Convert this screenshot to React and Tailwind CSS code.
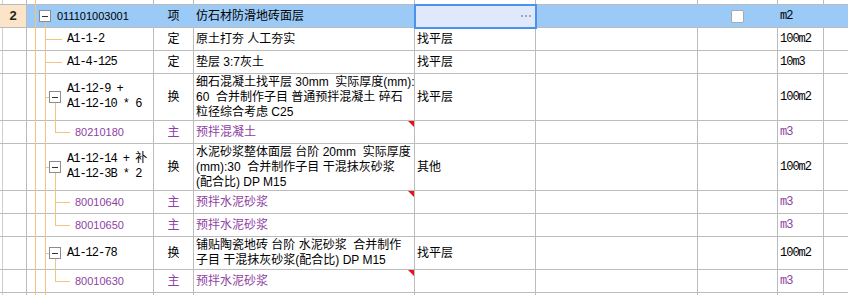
import React from 'react';

const GRID = 'grid grid-cols-[27px_127px_40px_221px_121px_162px_80px_46px_25px]';
const LINE = 'border-[#bcbcbc]';
const CJK = "font-['Liberation_Sans','Noto_Sans_CJK_SC',sans-serif]";
const MONO = "font-['Liberation_Mono','Noto_Sans_CJK_SC',monospace] text-[12px] tracking-[-1px]";
const SANS = "font-['Liberation_Sans',Arial,sans-serif] text-[11px]";
const ORANGE = 'bg-[#f1c47f]';

const rows = [
  { id: 1, hl: true, num: '2', kind: 'l1', code: ['011101003001'], sans: true, type: '项', desc: ['仿石材防滑地砖面层'], spec: 'edit', unit: 'm2', h: 'h-[23px]' },
  { id: 2, kind: 'leaf', code: ['A1-1-2'], type: '定', desc: ['原土打夯 人工夯实'], spec: '找平层', unit: '100m2', h: 'h-[23px]' },
  { id: 3, kind: 'leaf', code: ['A1-4-125'], type: '定', desc: ['垫层 3:7灰土'], spec: '找平层', unit: '10m3', h: 'h-[23px]' },
  {
    id: 4, kind: 'box', code: ['A1-12-9 +', 'A1-12-10 * 6'], type: '换',
    desc: ['细石混凝土找平层 30mm  实际厚度(mm):', '60  合并制作子目 普通预拌混凝土 碎石', '粒径综合考虑 C25'],
    spec: '找平层', unit: '100m2', h: 'h-[47px]',
  },
  { id: 5, kind: 'l3', last: true, purple: true, tri: true, code: ['80210180'], sans: true, type: '主', desc: ['预拌混凝土'], unit: 'm3', h: 'h-[23px]' },
  {
    id: 6, kind: 'box', code: ['A1-12-14 + 补', 'A1-12-3B * 2'], type: '换',
    desc: ['水泥砂浆整体面层 台阶 20mm  实际厚度', '(mm):30  合并制作子目 干混抹灰砂浆', '(配合比) DP M15'],
    spec: '其他', unit: '100m2', h: 'h-[47px]',
  },
  { id: 7, kind: 'l3', purple: true, tri: true, code: ['80010640'], sans: true, type: '主', desc: ['预拌水泥砂浆'], unit: 'm3', h: 'h-[23px]' },
  { id: 8, kind: 'l3', last: true, purple: true, code: ['80010650'], sans: true, type: '主', desc: ['预拌水泥砂浆'], unit: 'm3', h: 'h-[23px]' },
  {
    id: 9, kind: 'box', code: ['A1-12-78'], type: '换',
    desc: ['铺贴陶瓷地砖 台阶 水泥砂浆  合并制作', '子目 干混抹灰砂浆(配合比) DP M15'],
    spec: '找平层', unit: '100m2', h: 'h-[33px]',
  },
  { id: 10, kind: 'l3', last: true, purple: true, tri: true, code: ['80010630'], sans: true, type: '主', desc: ['预拌水泥砂浆'], unit: 'm3', h: 'h-[23px]' },
  { id: 11, kind: 'blank', code: [], type: '', desc: [], unit: '', h: 'h-[23px]' },
];

const MinusBox = () => (
  <div className="relative z-10 w-[12px] h-[12px] shrink-0 border border-[#8c8c8c] bg-white flex items-center justify-center">
    <div className="w-[6px] h-px bg-[#333]" />
  </div>
);

const TreeLines = ({ kind, last }) => {
  // x=35 ancestor line always; others depend on node type
  return (
    <>
      <div className={`absolute left-[8px] top-0 bottom-[-1px] w-px ${ORANGE}`} />
      {kind === 'l1' && <div className={`absolute left-[18px] top-[calc(50%+6px)] bottom-[-1px] w-px ${ORANGE}`} />}
      {kind !== 'l1' && kind !== 'top' && <div className={`absolute left-[18px] top-0 bottom-[-1px] w-px ${ORANGE}`} />}
      {kind === 'leaf' && <div className={`absolute left-[18px] top-1/2 w-[17px] h-px ${ORANGE}`} />}
      {kind === 'box' && (
        <>
          <div className={`absolute left-[18px] top-1/2 w-[4px] h-px ${ORANGE}`} />
          <div className={`absolute left-[28px] top-[calc(50%+6px)] bottom-[-1px] w-px ${ORANGE}`} />
        </>
      )}
      {kind === 'l3' && (
        <>
          {last ? (
            <div className={`absolute left-[28px] top-0 h-[calc(50%+1px)] w-px ${ORANGE}`} />
          ) : (
            <div className={`absolute left-[28px] top-0 bottom-[-1px] w-px ${ORANGE}`} />
          )}
          <div className={`absolute left-[28px] top-1/2 w-[15px] h-px ${ORANGE}`} />
        </>
      )}
    </>
  );
};

const Dots = () => (
  <div className="flex gap-[2px] mr-[4px]">
    <div className="w-[2px] h-[2px] bg-[#97a9c4]" />
    <div className="w-[2px] h-[2px] bg-[#97a9c4]" />
    <div className="w-[2px] h-[2px] bg-[#97a9c4]" />
  </div>
);

const Row = ({ r }) => {
  const txt = r.purple ? 'text-[#8e3fa3]' : 'text-black';
  const vr = r.hl ? 'border-r-transparent' : '';
  const cell = `border-r border-b ${LINE} ${vr}`;
  const pad = r.kind === 'l1' ? 'pl-[12px]' : r.kind === 'box' ? 'pl-[22px]' : r.kind === 'leaf' ? 'pl-[40px]' : 'pl-[48px]';
  const codeFont = r.sans ? SANS : MONO;

  return (
    <div className={`${GRID} ${r.h} ${r.hl ? 'bg-[#9ccaf6]' : 'bg-white'}`}>
      <div
        className={`border-r border-b ${LINE} flex items-center justify-center ${
          r.hl ? 'bg-[#fce4c8]' : 'shadow-[inset_2px_0_0_#fff,inset_3px_0_0_#cfcfcf]'
        }`}
      >
        <span className="font-['Liberation_Sans',Arial,sans-serif] text-[13px] font-bold text-[#222]">{r.num}</span>
      </div>

      <div className={`${cell} relative flex items-center ${pad}`}>
        {r.kind !== 'blank' && <TreeLines kind={r.kind} last={r.last} />}
        {r.kind === 'blank' && <TreeLines kind="leafless" />}
        {(r.kind === 'l1' || r.kind === 'box') && <MinusBox />}
        <div className={`relative ${r.kind === 'l1' || r.kind === 'box' ? 'ml-[6px]' : ''} ${codeFont} ${txt} leading-[15px] whitespace-pre`}>
          {r.code.map((c) => (
            <div key={c}>{c}</div>
          ))}
        </div>
      </div>

      <div className={`${cell} flex items-center justify-center ${CJK} text-[12px] ${txt}`}>{r.type}</div>

      <div className={`${cell} relative flex flex-col justify-center pl-[2px] ${CJK} text-[12px] leading-[15px] ${txt} overflow-hidden`}>
        {r.desc.map((d) => (
          <div key={d} className="whitespace-pre">{d}</div>
        ))}
        {r.tri && <div className="absolute top-0 right-0 w-[6px] h-[6px] bg-[#e8121c] [clip-path:polygon(0_0,100%_0,100%_100%)]" />}
      </div>

      {r.spec === 'edit' ? (
        <div className={`${cell} relative z-10 flex items-center justify-end bg-[#dfe9fb] outline-2 outline-[#4b93ea] -outline-offset-1`}>
          <Dots />
        </div>
      ) : (
        <div className={`${cell} flex items-center pl-[2px] ${CJK} text-[12px] text-black`}>{r.spec}</div>
      )}

      <div className={cell} />

      <div className={`${cell} flex items-center justify-center`}>
        {r.hl && <div className="w-[13px] h-[13px] rounded-[2px] border border-[#a9a9a9] bg-white" />}
      </div>

      <div className={`${cell} flex items-center pl-[2px] ${MONO} ${txt}`}>{r.unit}</div>

      <div className={cell} />
    </div>
  );
};

export default function App() {
  return (
    <div className="w-[848px] h-[295px] overflow-hidden bg-white">
      <div className={`${GRID} h-[5px] bg-white`}>
        <div className={`border-r border-b ${LINE} shadow-[inset_2px_0_0_#fff,inset_3px_0_0_#cfcfcf]`} />
        <div className={`border-r border-b ${LINE} relative`}>
          <div className={`absolute left-[8px] top-0 bottom-[-1px] w-px ${ORANGE}`} />
        </div>
        <div className={`border-r border-b ${LINE}`} />
        <div className={`border-r border-b ${LINE}`} />
        <div className={`border-r border-b ${LINE}`} />
        <div className={`border-r border-b ${LINE}`} />
        <div className={`border-r border-b ${LINE}`} />
        <div className={`border-r border-b ${LINE}`} />
        <div className={`border-r border-b ${LINE}`} />
      </div>
      {rows.map((r) => (
        <Row key={r.id} r={r} />
      ))}
    </div>
  );
}
